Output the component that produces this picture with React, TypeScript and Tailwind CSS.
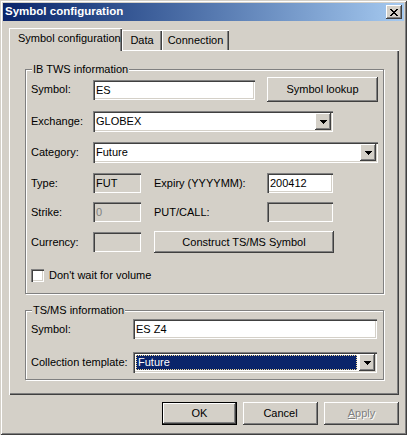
import React from "react";

const sunken =
  "shadow-[inset_1px_1px_0_#808080,inset_2px_2px_0_#404040,inset_-1px_-1px_0_#ffffff,inset_-2px_-2px_0_#d4d0c8]";
const raised =
  "shadow-[inset_-1px_-1px_0_#404040,inset_1px_1px_0_#ffffff,inset_-2px_-2px_0_#808080]";

function Arrow() {
  return (
    <svg width="7" height="4" viewBox="0 0 7 4" shapeRendering="crispEdges">
      <path d="M0 0h7v1h-1v1h-1v1h-1v1h-1v-1h-1v-1h-1v-1h-1z" fill="#000" />
    </svg>
  );
}

function Edit({ className, children }: { className: string; children?: React.ReactNode }) {
  return (
    <div className={`${className} ${sunken} flex items-center pl-[3px] pt-[1px]`}>{children}</div>
  );
}

function Combo({
  className,
  text,
  selected,
}: {
  className: string;
  text: string;
  selected?: boolean;
}) {
  return (
    <div className={`${className} h-[21px] bg-white ${sunken} flex items-stretch p-[2px]`}>
      {selected ? (
        <div className="flex-1 p-[1px] pr-[2px] flex">
          <div className="flex-1 bg-[#0a246a] text-white border border-dotted border-[#f5db95] flex items-center pl-[1px]">
            {text}
          </div>
        </div>
      ) : (
        <div className="flex-1 flex items-center pl-[1px]">{text}</div>
      )}
      <div className={`w-[16px] bg-[#d4d0c8] ${raised} flex items-center justify-center`}>
        <Arrow />
      </div>
    </div>
  );
}

function Button({
  className,
  children,
}: {
  className: string;
  children: React.ReactNode;
}) {
  return (
    <div className={`${className} bg-[#d4d0c8] ${raised} flex items-center justify-center`}>
      {children}
    </div>
  );
}

function Group({
  className,
  label,
  children,
}: {
  className: string;
  label: string;
  children: React.ReactNode;
}) {
  return (
    <div
      className={`${className} relative border border-[#808080] shadow-[inset_1px_1px_0_#ffffff,1px_1px_0_#ffffff] pl-[5px] flex flex-col`}
    >
      <div className="absolute left-[6px] top-[-7px] px-[1px] bg-[#d4d0c8] leading-[13px]">
        {label}
      </div>
      {children}
    </div>
  );
}

export default function App() {
  return (
    <div className="w-[407px] h-[435px] bg-[#d4d0c8] p-[3px] text-[11px] leading-none text-black font-['Liberation_Sans',Arial,sans-serif] shadow-[inset_1px_1px_0_#d4d0c8,inset_-1px_-1px_0_#404040,inset_2px_2px_0_#ffffff,inset_-2px_-2px_0_#808080] flex flex-col">
      {/* Title bar */}
      <div className="h-[18px] bg-linear-to-r from-[#0a246a] to-[#a6caf0] flex items-center justify-between pl-[2px] pr-[2px]">
        <span className="text-white font-bold text-[11.5px]">Symbol configuration</span>
        <div className={`w-[16px] h-[14px] bg-[#d4d0c8] ${raised} flex items-center justify-center`}>
          <svg width="8" height="7" viewBox="0 0 8 7" shapeRendering="crispEdges">
            <path
              d="M0 0h2v1h1v1h2v-1h1v-1h2v1h-1v1h-1v1h-1v1h1v1h1v1h1v1h-2v-1h-1v-1h-2v1h-1v1h-2v-1h1v-1h1v-1h1v-1h-1v-1h-1v-1h-1z"
              fill="#000"
            />
          </svg>
        </div>
      </div>

      <div className="pl-[6px] pr-[5px] pt-[7px] flex flex-col">
        {/* Tabs */}
        <div className="h-[22px] flex items-end">
          <div className="relative z-10 -mb-px w-[113px] h-[23px] bg-[#d4d0c8] shadow-[inset_1px_1px_0_#ffffff,inset_-1px_0_0_#404040,inset_-2px_0_0_#808080] flex items-center pl-[9px] pb-[2px]">
            Symbol configuration
          </div>
          <div className="w-[40px] h-[20px] shadow-[inset_1px_1px_0_#ffffff,inset_-1px_0_0_#404040,inset_-2px_0_0_#808080] flex items-center justify-center">
            Data
          </div>
          <div className="w-[67px] h-[20px] shadow-[inset_1px_1px_0_#ffffff,inset_-1px_0_0_#404040,inset_-2px_0_0_#808080] flex items-center justify-center">
            Connection
          </div>
        </div>

        {/* Panel */}
        <div className="w-[390px] h-[345px] shadow-[inset_1px_1px_0_#ffffff,inset_-1px_-1px_0_#404040,inset_-2px_-2px_0_#808080] pt-[19px] pl-[16px] flex flex-col">
          <Group className="w-[359px] h-[225px]" label="IB TWS information">
            <div className="mt-[7px] h-[25px] flex items-center">
              <span className="w-[62px]">Symbol:</span>
              <Edit className="w-[162px] h-[20px] bg-white">ES</Edit>
              <Button className="ml-[12px] w-[111px] h-[25px]">Symbol lookup</Button>
            </div>
            <div className="mt-[9px] h-[21px] flex items-center">
              <span className="w-[62px]">Exchange:</span>
              <Combo className="w-[240px]" text="GLOBEX" />
            </div>
            <div className="mt-[10px] h-[21px] flex items-center">
              <span className="w-[62px]">Category:</span>
              <Combo className="w-[285px]" text="Future" />
            </div>
            <div className="mt-[10px] h-[20px] flex items-center">
              <span className="w-[62px]">Type:</span>
              <Edit className="w-[48px] h-[20px]">FUT</Edit>
              <span className="ml-[13px] w-[113px]">Expiry (YYYYMM):</span>
              <Edit className="w-[66px] h-[20px] bg-white">200412</Edit>
            </div>
            <div className="mt-[9px] h-[20px] flex items-center">
              <span className="w-[62px]">Strike:</span>
              <Edit className="w-[48px] h-[20px] text-[#808080]">0</Edit>
              <span className="ml-[13px] w-[113px]">PUT/CALL:</span>
              <Edit className="w-[66px] h-[20px]" />
            </div>
            <div className="mt-[9px] h-[22px] flex items-center">
              <span className="w-[62px]">Currency:</span>
              <Edit className="w-[48px] h-[20px]" />
              <Button className="ml-[13px] w-[180px] h-[22px]">Construct TS/MS Symbol</Button>
            </div>
            <div className="mt-[16px] h-[13px] flex items-center">
              <div className={`w-[13px] h-[13px] bg-white ${sunken}`} />
              <span className="ml-[5px]">Don't wait for volume</span>
            </div>
          </Group>

          <Group className="mt-[16px] w-[359px] h-[70px]" label="TS/MS information">
            <div className="mt-[8px] h-[20px] flex items-center">
              <span className="w-[102px]">Symbol:</span>
              <Edit className="w-[244px] h-[20px] bg-white">ES Z4</Edit>
            </div>
            <div className="mt-[13px] h-[21px] flex items-center">
              <span className="w-[102px]">Collection template:</span>
              <Combo className="w-[244px]" text="Future" selected />
            </div>
          </Group>
        </div>

        {/* Buttons */}
        <div className="mt-[7px] w-[390px] flex justify-end gap-[6px]">
          <div className="w-[75px] h-[23px] border border-black flex">
            <Button className="flex-1">OK</Button>
          </div>
          <Button className="w-[75px] h-[23px]">Cancel</Button>
          <Button className="w-[75px] h-[23px] text-[#808080] [text-shadow:1px_1px_0_#ffffff]">
            <span>
              <span className="underline">A</span>pply
            </span>
          </Button>
        </div>
      </div>
    </div>
  );
}
